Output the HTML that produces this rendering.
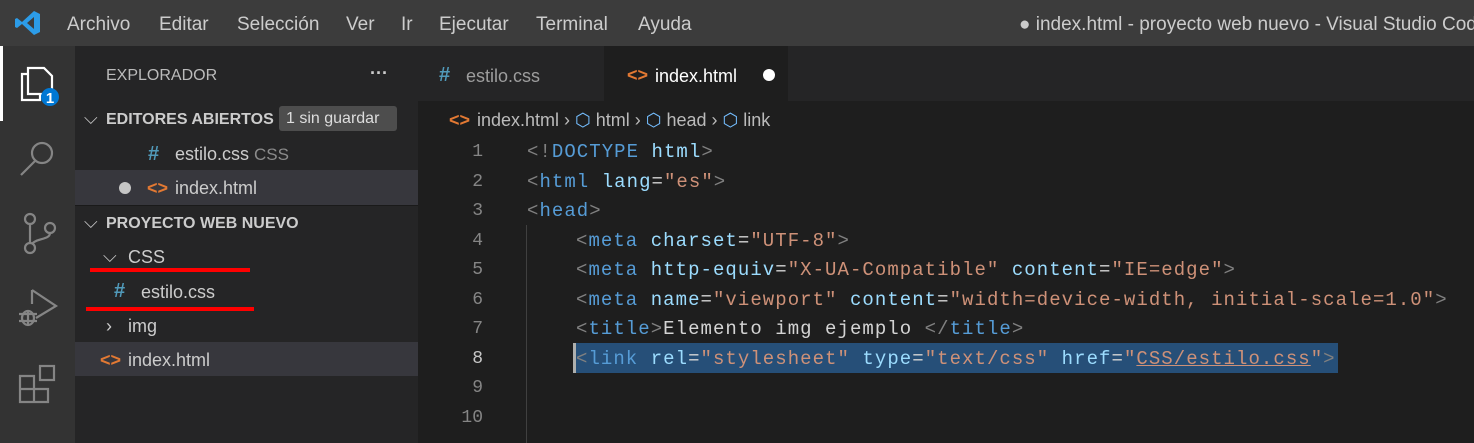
<!DOCTYPE html>
<html><head><meta charset="utf-8"><style>
*{margin:0;padding:0;box-sizing:border-box}
body{width:1474px;height:443px;overflow:hidden;background:#1e1e1e;font-family:"Liberation Sans",sans-serif;position:relative;color:#ccc}
.a{position:absolute;white-space:nowrap}
#title{left:0;top:0;width:1474px;height:46px;background:#3c3c3c}
.m{top:14px;font-size:19px;color:#cccccc}
#act{left:0;top:46px;width:75px;height:397px;background:#333333}
#side{left:75px;top:46px;width:343px;height:397px;background:#252526}
#tabs{left:418px;top:46px;width:1056px;height:55px;background:#252526}
.s{font-size:18px;color:#cccccc}
.h{font-size:16px;font-weight:bold;color:#cccccc}
.hs{font-size:20px;font-weight:bold;color:#519aba}
.code{font-family:"Liberation Mono",monospace;font-size:19px;letter-spacing:1.05px;color:#d4d4d4}
.ln{font-family:"Liberation Mono",monospace;font-size:18px;color:#858585;width:40px;text-align:right}
.b{color:#808080}.t{color:#569cd6}.at{color:#9cdcfe}.st{color:#ce9178}
.red{background:#f00;height:4px}
</style></head><body>
<div id="title" class="a"></div>
<svg class="a" style="left:14px;top:9px" width="28" height="28" viewBox="0 0 28 28"><path d="M20 2 L26 5 V23 L20 26 L8 15 L3 19 L1 18 V10 L3 9 L8 13 Z M20 8 L13 14 L20 20 Z" fill="#2c9ce8"/></svg>
<div class="a m" style="left:67px">Archivo</div>
<div class="a m" style="left:159px">Editar</div>
<div class="a m" style="left:237px">Selección</div>
<div class="a m" style="left:346px">Ver</div>
<div class="a m" style="left:401px">Ir</div>
<div class="a m" style="left:439px">Ejecutar</div>
<div class="a m" style="left:536px">Terminal</div>
<div class="a m" style="left:638px">Ayuda</div>
<div class="a m" style="left:1019px">● index.html - proyecto web nuevo - Visual Studio Cod</div>
<div id="act" class="a"></div>
<div class="a" style="left:0;top:46px;width:3px;height:75px;background:#fff"></div>
<svg class="a" style="left:14px;top:60px" width="50" height="50" viewBox="0 0 50 50" fill="none" stroke="#fff" stroke-width="2.2"><path d="M14 14 H8 V40 H26 V34"/><path d="M14 8 H30 L38 16 V34 H14 Z"/><circle cx="36" cy="37" r="9" fill="#0078d4" stroke="none"/><text x="36" y="43" fill="#fff" stroke="none" font-size="15" font-family="Liberation Sans" text-anchor="middle" font-weight="bold">1</text></svg>
<svg class="a" style="left:16px;top:136px" width="44" height="44" viewBox="0 0 44 44" fill="none" stroke="#858585" stroke-width="2.2"><circle cx="26" cy="17" r="10"/><path d="M19 25 L5 39"/></svg>
<svg class="a" style="left:16px;top:210px" width="44" height="48" viewBox="0 0 44 48" fill="none" stroke="#858585" stroke-width="2.2"><circle cx="14" cy="9" r="5"/><circle cx="14" cy="38" r="5"/><circle cx="34" cy="18" r="5"/><path d="M14 14 V33 M34 23 C34 30 20 28 16 34"/></svg>
<svg class="a" style="left:16px;top:286px" width="46" height="46" viewBox="0 0 46 46" fill="none" stroke="#858585" stroke-width="2.2"><path d="M16 4 L40 20 L20 32"/><path d="M16 4 V18"/><ellipse cx="12" cy="32" rx="6" ry="7"/><path d="M3 28 H21 M3 35 H21 M12 25 V39"/></svg>
<svg class="a" style="left:16px;top:362px" width="44" height="44" viewBox="0 0 44 44" fill="none" stroke="#858585" stroke-width="2.2"><path d="M4 14 H18 V40 H4 Z M4 27 H32 V40 H18"/><rect x="24" y="4" width="14" height="14"/></svg>
<div id="side" class="a"></div>
<div class="a" style="left:106px;top:67px;font-size:16px;color:#bbbbbb">EXPLORADOR</div>
<div class="a" style="left:370px;top:63px;font-size:18px;color:#ccc;font-weight:bold">···</div>
<div class="a" style="left:75px;top:170px;width:343px;height:35px;background:#37373d"></div>
<div class="a" style="left:75px;top:342px;width:343px;height:34px;background:#37373d"></div>
<div class="a" style="left:75px;top:205px;width:343px;height:1px;background:#1a1a1a"></div>
<div class="a s" style="left:84px;top:108px">⌵</div>
<div class="a h" style="left:106px;top:111px">EDITORES ABIERTOS</div>
<div class="a" style="left:279px;top:106px;width:118px;height:25px;background:#4d4d4d;border-radius:3px;font-size:16px;color:#ddd;padding:4px 0 0 7px">1 sin guardar</div>
<div class="a hs" style="left:148px;top:143px">#</div>
<div class="a s" style="left:175px;top:144px">estilo.css <span style="color:#8b8b8b;font-size:17px">CSS</span></div>
<div class="a" style="left:119px;top:182px;width:12px;height:12px;border-radius:50%;background:#c5c5c5"></div>
<div class="a s" style="left:147px;top:178px;color:#e37933;font-weight:bold">&lt;&gt;</div>
<div class="a s" style="left:175px;top:178px">index.html</div>
<div class="a s" style="left:84px;top:212px">⌵</div>
<div class="a h" style="left:106px;top:215px">PROYECTO WEB NUEVO</div>
<div class="a s" style="left:103px;top:246px">⌵</div>
<div class="a s" style="left:128px;top:247px">CSS</div>
<div class="a red" style="left:90px;top:268px;width:160px"></div>
<div class="a hs" style="left:114px;top:280px">#</div>
<div class="a s" style="left:141px;top:282px">estilo.css</div>
<div class="a red" style="left:86px;top:307px;width:168px"></div>
<div class="a s" style="left:106px;top:316px">›</div>
<div class="a s" style="left:128px;top:316px">img</div>
<div class="a s" style="left:100px;top:350px;color:#e37933;font-weight:bold">&lt;&gt;</div>
<div class="a s" style="left:128px;top:350px">index.html</div>
<div id="tabs" class="a"></div>
<div class="a" style="left:604px;top:46px;width:184px;height:55px;background:#1e1e1e"></div>
<div class="a hs" style="left:439px;top:64px">#</div>
<div class="a s" style="left:466px;top:66px;color:#9d9d9d">estilo.css</div>
<div class="a s" style="left:627px;top:65px;color:#e37933;font-weight:bold">&lt;&gt;</div>
<div class="a s" style="left:655px;top:66px;color:#fff">index.html</div>
<div class="a" style="left:763px;top:69px;width:12px;height:12px;border-radius:50%;background:#fff"></div>
<div class="a s" style="left:449px;top:110px;color:#e37933;font-weight:bold">&lt;&gt;</div>
<div class="a s" style="left:477px;top:110px;color:#bbb">index.html › <span style="color:#75beff">⬡</span> html › <span style="color:#75beff">⬡</span> head › <span style="color:#75beff">⬡</span> link</div>
<div class="a" style="left:573px;top:343px;width:765px;height:30px;background:#264f78"></div>
<div class="a" style="left:573px;top:343px;width:3px;height:30px;background:#aeafad"></div>
<div class="a" style="left:526px;top:225px;width:1px;height:218px;background:#404040"></div>
<div class="a ln" style="left:443px;top:142px">1</div>
<div class="a ln" style="left:443px;top:172px">2</div>
<div class="a ln" style="left:443px;top:201px">3</div>
<div class="a ln" style="left:443px;top:231px">4</div>
<div class="a ln" style="left:443px;top:260px">5</div>
<div class="a ln" style="left:443px;top:290px">6</div>
<div class="a ln" style="left:443px;top:319px">7</div>
<div class="a ln" style="left:443px;top:349px;color:#c6c6c6">8</div>
<div class="a ln" style="left:443px;top:378px">9</div>
<div class="a ln" style="left:443px;top:408px">10</div>
<div class="a code" style="left:527px;top:141px"><span class="b">&lt;!</span><span class="t">DOCTYPE</span> <span class="at">html</span><span class="b">&gt;</span></div>
<div class="a code" style="left:527px;top:171px"><span class="b">&lt;</span><span class="t">html</span> <span class="at">lang</span>=<span class="st">"es"</span><span class="b">&gt;</span></div>
<div class="a code" style="left:527px;top:200px"><span class="b">&lt;</span><span class="t">head</span><span class="b">&gt;</span></div>
<div class="a code" style="left:576px;top:230px"><span class="b">&lt;</span><span class="t">meta</span> <span class="at">charset</span>=<span class="st">"UTF-8"</span><span class="b">&gt;</span></div>
<div class="a code" style="left:576px;top:259px"><span class="b">&lt;</span><span class="t">meta</span> <span class="at">http-equiv</span>=<span class="st">"X-UA-Compatible"</span> <span class="at">content</span>=<span class="st">"IE=edge"</span><span class="b">&gt;</span></div>
<div class="a code" style="left:576px;top:289px"><span class="b">&lt;</span><span class="t">meta</span> <span class="at">name</span>=<span class="st">"viewport"</span> <span class="at">content</span>=<span class="st">"width=device-width, initial-scale=1.0"</span><span class="b">&gt;</span></div>
<div class="a code" style="left:576px;top:318px"><span class="b">&lt;</span><span class="t">title</span><span class="b">&gt;</span>Elemento img ejemplo <span class="b">&lt;/</span><span class="t">title</span><span class="b">&gt;</span></div>
<div class="a code" style="left:576px;top:348px"><span class="b">&lt;</span><span class="t">link</span> <span class="at">rel</span>=<span class="st">"stylesheet"</span> <span class="at">type</span>=<span class="st">"text/css"</span> <span class="at">href</span>=<span class="st">"<u>CSS/estilo.css</u>"</span><span class="b">&gt;</span></div>
</body></html>
